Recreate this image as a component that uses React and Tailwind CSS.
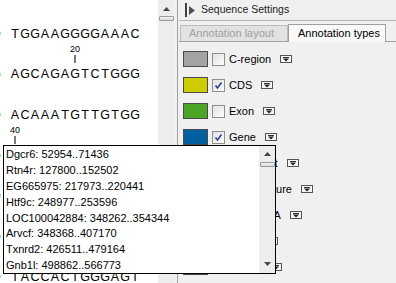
import React from 'react';

const rows = [
  { seq: 'TGGAAGGGGAAAC' },
  { seq: 'AGCAGAGTCTGGG', label: '20', at: 6 },
  { seq: 'ACAAATGTTGTGG' },
  { seq: 'GCTGGAGAAACTT', label: '40', at: 0 },
  { seq: 'CAGTGGATCCAGA', label: '60', at: 7 },
  { seq: 'TGCAGCTGGACAA' },
  { seq: 'TACCACTGGGAGT', label: '80', at: 1 },
];

const types = [
  { name: 'C-region', color: 'bg-[#a3a3a3]', checked: false },
  { name: 'CDS', color: 'bg-[#cccc00]', checked: true },
  { name: 'Exon', color: 'bg-[#4ca626]', checked: false },
  { name: 'Gene', color: 'bg-[#005f9e]', checked: true },
  { name: 'Transcript', color: 'bg-[#c05050]', checked: false },
  { name: 'Misc. feature', color: 'bg-[#808080]', checked: false },
  { name: 'Misc. RNA', color: 'bg-[#9060a0]', checked: false },
  { name: 'Intron', color: 'bg-[#a0a060]', checked: false },
  { name: 'mRNA', color: 'bg-[#e07020]', checked: true },
];

const genes = [
  'Dgcr6: 52954..71436',
  'Rtn4r: 127800..152502',
  'EG665975: 217973..220441',
  'Htf9c: 248977..253596',
  'LOC100042884: 348262..354344',
  'Arvcf: 348368..407170',
  'Txnrd2: 426511..479164',
  'Gnb1l: 498862..566773',
];

// tiny scroll arrow
function Arrow({ down }) {
  return (
    <svg width="7" height="4" viewBox="0 0 7 4" className="block">
      {down ? <path d="M0 0H7L3.5 4Z" fill="#444" /> : <path d="M0 4H7L3.5 0Z" fill="#444" />}
    </svg>
  );
}

function Thumb() {
  return <div className="h-[5px] w-[15px] rounded-[1px] border border-[#9a9a9a] bg-gradient-to-b from-[#f6f6f6] to-[#d8d8d8]" />;
}

function Dropdown() {
  return (
    <svg width="12" height="8" viewBox="0 0 12 8" className="block shrink-0">
      <rect x="0.5" y="0.5" width="11" height="7" fill="#f4f4f4" stroke="#555" />
      <path d="M3 2.5H9" stroke="#333" />
      <path d="M3 3.5H9L6 6.5Z" fill="#222" />
    </svg>
  );
}

function SeqBlock({ row }) {
  return (
    <div className="h-[40.5px] flex flex-col">
      <div className="h-[11px] flex pl-[10px]">
        {row.label && (
          <div className="w-[10px] text-center text-[9px] leading-[11px]" style={{ marginLeft: row.at * 10 }}>
            {row.label}
          </div>
        )}
      </div>
      <div className="h-[8px] flex pl-[10px]">
        {row.label && (
          <div className="w-[10px] flex justify-center" style={{ marginLeft: row.at * 10 }}>
            <div className="w-[2px] h-full bg-[#7a7a7a]" />
          </div>
        )}
      </div>
      <div className="h-[4.5px]" />
      <div className="h-[14px] flex items-center">
        <div className="w-px h-[3px] bg-[#8ee6e6]" />
        <div className="flex ml-[9px] text-[12.5px] leading-[14px] text-black">
          {row.seq.split('').map((c, i) => (
            <span key={i} className="w-[10px] text-center">{c}</span>
          ))}
        </div>
      </div>
    </div>
  );
}

export default function App() {
  return (
    <div className="w-[396px] h-[283px] relative overflow-hidden bg-[#f0f0f0] flex font-['Liberation_Sans',Arial,sans-serif] text-black">
      {/* Sequence view */}
      <div className="w-[174px] flex flex-col">
        <div className="h-[3px] bg-[#3d8ee6]" />
        <div className="flex-1 flex">
          <div className="w-[158px] bg-white pt-[3px] overflow-hidden">
            {rows.map((r, i) => <SeqBlock key={i} row={r} />)}
          </div>
          <div className="w-[16px] bg-[#ededed] flex flex-col items-center">
            <div className="mt-[7px]"><Arrow /></div>
            <div className="mt-[5px]"><Thumb /></div>
          </div>
        </div>
      </div>

      {/* splitter */}
      <div className="w-[5px] flex">
        <div className="w-[3px]" />
        <div className="w-px bg-[#a0a0a0]" />
      </div>

      {/* Settings panel */}
      <div className="flex-1 flex flex-col">
        <div className="h-[21px] flex items-center pl-[6px] border-b border-[#b4b4b4]">
          <div className="w-[2px] h-[14px] bg-[#404040]" />
          <svg width="6" height="9" viewBox="0 0 6 9" className="ml-[2px]">
            <path d="M0 0L6 4.5L0 9Z" fill="#505050" />
          </svg>
          <span className="ml-[6px] text-[10.5px] text-[#222]">Sequence Settings</span>
        </div>
        <div className="mt-[3px] h-[18px] flex items-end border-b border-[#a0a0a0]">
          <div className="ml-px w-[108px] h-[16px] bg-[#e2e2e2] border border-b-0 border-[#bcbcbc] pl-[8px] text-[11px] leading-[15px] text-[#a0a0a0]">
            Annotation layout
          </div>
          <div className="w-[98px] h-[18px] -mb-px bg-[#fafafa] border border-b-0 border-[#a0a0a0] pl-[9px] text-[11px] leading-[17px]">
            Annotation types
          </div>
        </div>
        <div className="pt-[4px] flex flex-col">
          {types.map((t) => (
            <div key={t.name} className="h-[26px] flex items-center pl-[4px]">
              <div className={`w-[25px] h-[16px] border border-[#4a4a4a] ${t.color}`} />
              <div className="ml-[4px] w-[13px] h-[13px] border border-[#8e8f8f] bg-gradient-to-br from-[#e2e2e2] to-[#fdfdfd] flex items-center justify-center">
                {t.checked && (
                  <svg width="9" height="9" viewBox="0 0 9 9">
                    <path d="M1.5 4.5L3.5 7L7.5 1.5" stroke="#2b3f94" strokeWidth="1.6" fill="none" />
                  </svg>
                )}
              </div>
              <span className="ml-[4px] text-[11px] text-black">{t.name}</span>
              <div className="ml-[9px]"><Dropdown /></div>
            </div>
          ))}
        </div>
      </div>

      {/* gene list popup */}
      <div className="absolute left-[3px] top-[145px] w-[273px] h-[129px] border border-black bg-white flex">
        <div className="flex-1 pl-[2px] text-[11px]">
          {genes.map((g) => (
            <div key={g} className="h-[15.9px] leading-[16px] whitespace-nowrap">{g}</div>
          ))}
        </div>
        <div className="w-[16px] bg-[#ededed] flex flex-col items-center">
          <div className="mt-[6px]"><Arrow /></div>
          <div className="mt-[6px]"><Thumb /></div>
          <div className="mt-auto mb-[7px]"><Arrow down /></div>
        </div>
      </div>
    </div>
  );
}
